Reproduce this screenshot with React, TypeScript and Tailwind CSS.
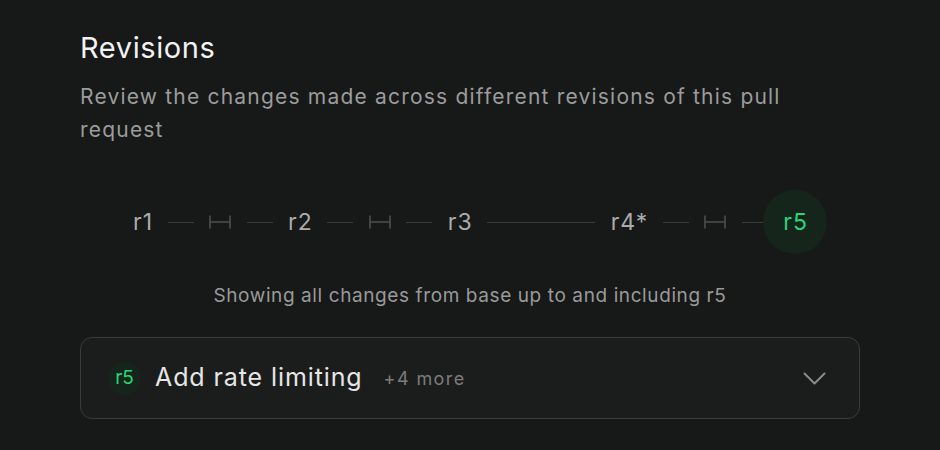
import React from 'react';

type Step = { kind: 'rev'; label: string; active?: boolean } | { kind: 'line'; long?: boolean } | { kind: 'gap' };

const steps: Step[] = [
  { kind: 'rev', label: 'r1' },
  { kind: 'line' },
  { kind: 'gap' },
  { kind: 'line' },
  { kind: 'rev', label: 'r2' },
  { kind: 'line' },
  { kind: 'gap' },
  { kind: 'line' },
  { kind: 'rev', label: 'r3' },
  { kind: 'line', long: true },
  { kind: 'rev', label: 'r4*' },
  { kind: 'line' },
  { kind: 'gap' },
  { kind: 'line' },
  { kind: 'rev', label: 'r5', active: true },
];

function GapIcon() {
  return (
    <svg width="22" height="14" viewBox="0 0 22 14" fill="none" stroke="#4d4e4e" strokeWidth="1.6">
      <path d="M1 0.5v13M21 0.5v13M1 7h20" />
    </svg>
  );
}

export default function App() {
  return (
    <div className="w-[940px] h-[450px] bg-[#171818] px-20 pt-[30px] font-['Inter',sans-serif]">
      <h2 className="text-[29px] leading-[36px] tracking-[0.6px] text-[#f2f2f2] font-normal">Revisions</h2>
      <p className="mt-[14px] text-[21px] leading-[33px] tracking-[1.2px] text-[#9c9c9c]">
        Review the changes made across different revisions of this pull request
      </p>

      {/* Revision timeline */}
      <div className="mt-[44px] h-16 flex items-center justify-center gap-[15.5px]">
        {steps.map((s, i) => {
          if (s.kind === 'line') {
            return <div key={i} className={`h-px bg-[#3b3c3c] ${s.long ? 'w-[108px]' : 'w-[26px]'}`} />;
          }
          if (s.kind === 'gap') {
            return <GapIcon key={i} />;
          }
          return (
            <div key={i} className="relative flex items-center justify-center">
              {s.active && (
                <div className="absolute left-1/2 top-1/2 -translate-x-1/2 -translate-y-1/2 w-16 h-16 rounded-full bg-[#15251b]" />
              )}
              <span
                className={`relative text-[23px] leading-none tracking-[1px] -mr-px ${
                  s.active ? 'text-[#2cd478]' : 'text-[#ababab]'
                }`}
              >
                {s.label}
              </span>
            </div>
          );
        })}
      </div>

      <p className="mt-[30px] text-center text-[19px] leading-[24px] tracking-[0.6px] text-[#9a9a9a]">
        Showing all changes from base up to and including r5
      </p>

      {/* Selected revision */}
      <div className="mt-[29px] h-[82px] rounded-xl border border-[#3a3b3b] bg-[#1b1c1c] pl-[27px] pr-[33px] flex items-center">
        <div className="w-[33px] h-[33px] rounded-full bg-[#15251b] flex items-center justify-center text-[19px] text-[#2cd478]">
          r5
        </div>
        <span className="ml-[14px] text-[25px] tracking-[0.9px] text-[#e6e6e6]">Add rate limiting</span>
        <span className="ml-[21px] text-[18px] tracking-[1.4px] text-[#7c7c7c]">+4 more</span>
        <svg className="ml-auto" width="23" height="13" viewBox="0 0 23 13" fill="none" stroke="#8a8a8a" strokeWidth="2" strokeLinecap="round" strokeLinejoin="round">
          <path d="M1.5 1.5l10 10 10-10" />
        </svg>
      </div>
    </div>
  );
}
